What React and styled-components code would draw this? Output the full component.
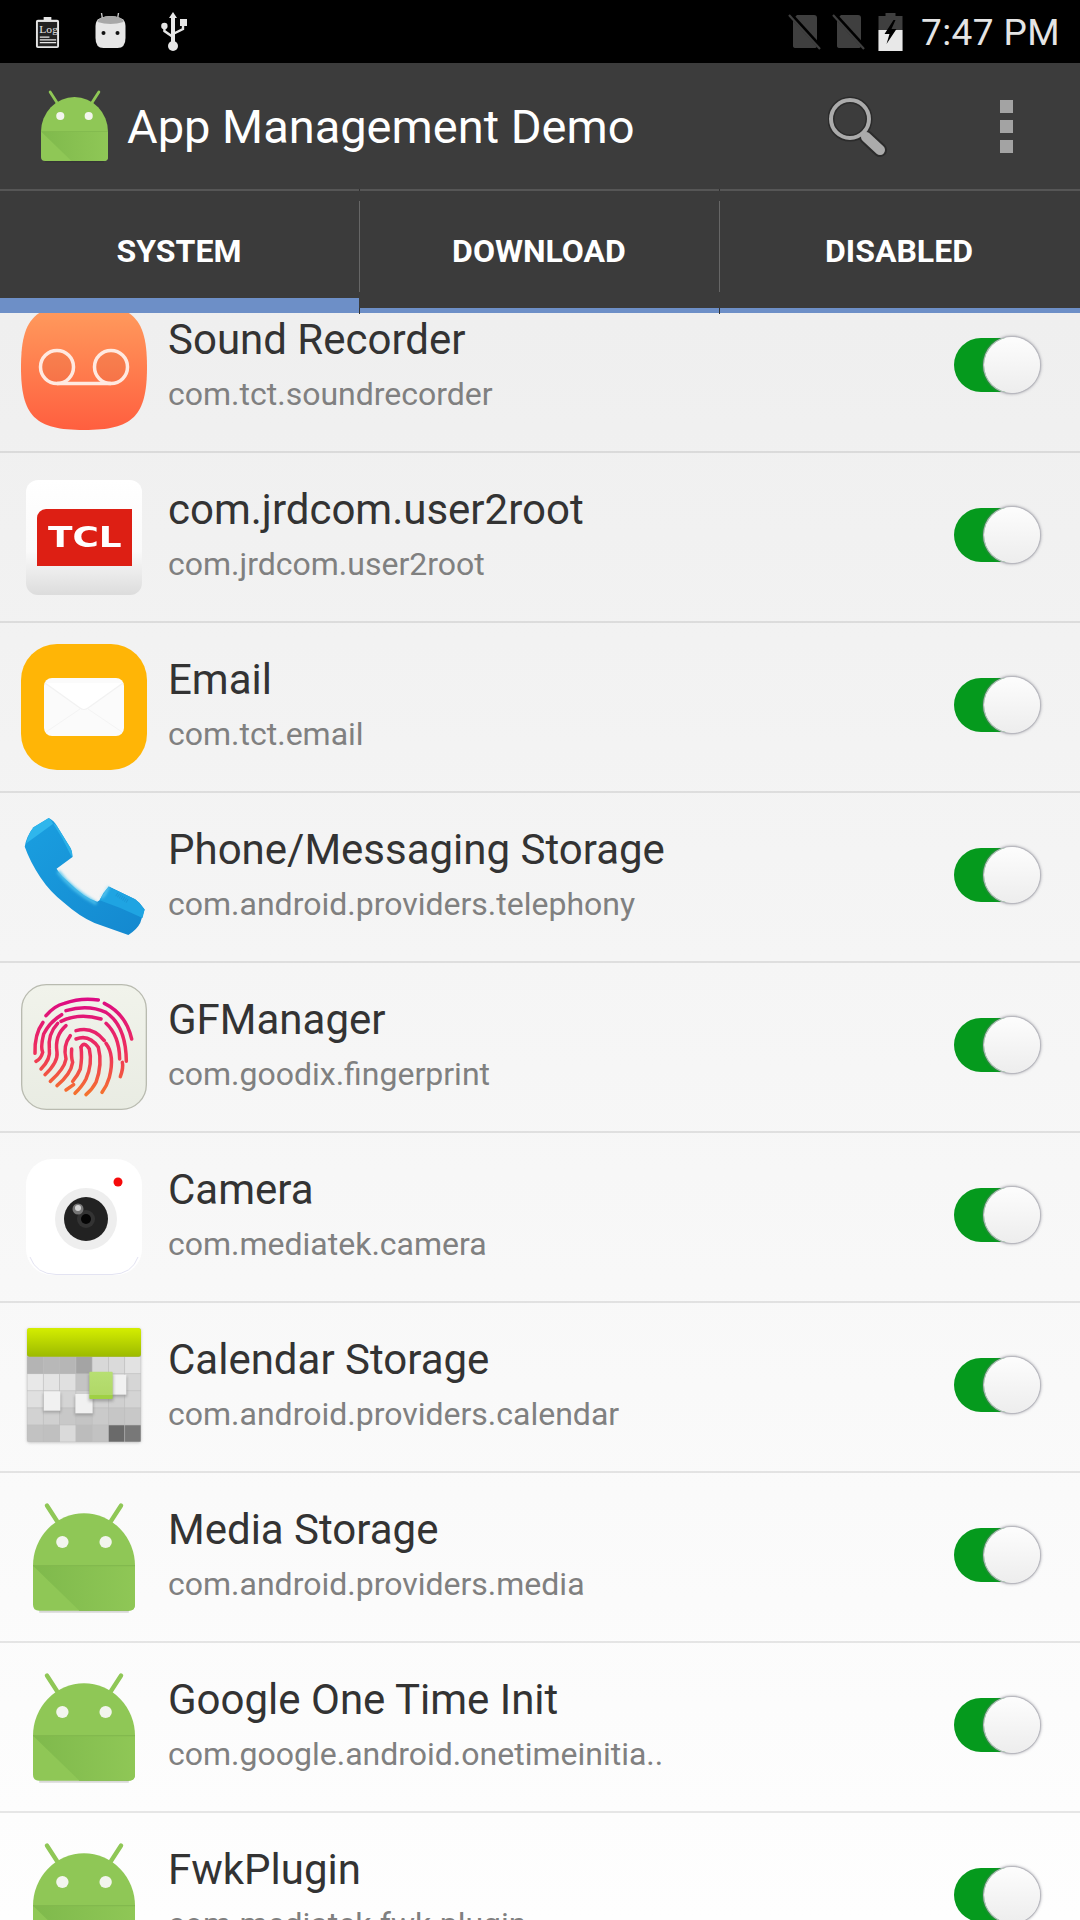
import React from "react";
import styled, { createGlobalStyle } from "styled-components";

const Global = createGlobalStyle`
  html, body { margin: 0; padding: 0; background: #000; }
  * { box-sizing: border-box; }
`;

const Screen = styled.div`
  width: 1080px;
  height: 1920px;
  overflow: hidden;
  display: flex;
  flex-direction: column;
  font-family: Roboto, "Liberation Sans", sans-serif;
  background: linear-gradient(#ececec, #fefefe);
`;

const StatusBar = styled.div`
  height: 63px;
  flex: none;
  background: #000;
  display: flex;
  align-items: center;
  padding: 0 20px 0 35px;
`;

const StatusLeft = styled.div`
  display: flex;
  align-items: center;
  flex: 1;
  gap: 35px;
`;

const StatusRight = styled.div`
  display: flex;
  align-items: center;
  gap: 10px;
`;

const Clock = styled.span`
  color: #e4e4e4;
  font-size: 37px;
  line-height: 63px;
  margin-left: 8px;
  letter-spacing: 0.4px;
  padding-top: 2px;
`;

const ActionBar = styled.div`
  height: 126px;
  flex: none;
  background: #3c3c3c;
  display: flex;
  align-items: center;
  padding: 0 67px 0 41px;
`;

const AppTitle = styled.div`
  flex: 1;
  color: #fff;
  font-size: 47px;
  margin-left: 19px;
  padding-top: 1px;
`;

const Overflow = styled.div`
  display: flex;
  flex-direction: column;
  gap: 7px;
  margin-left: 112px;
`;

const Dot = styled.span`
  width: 13px;
  height: 13px;
  background: #a3a3a3;
`;

const TabBar = styled.div`
  height: 124px;
  flex: none;
  display: flex;
  background: #3b3b3b;
  border-top: 2px solid #565656;
  position: relative;
  z-index: 2;
`;

const Tab = styled.div`
  flex: 1;
  display: flex;
  align-items: center;
  justify-content: center;
  position: relative;
  color: #fff;
  font-size: 32px;
  font-weight: 700;
  padding: 0 2px 2px 0;
`;

const TabIndicator = styled.span`
  position: absolute;
  left: 0;
  right: ${(p) => (p.$active ? "1px" : "0")};
  bottom: 0;
  height: ${(p) => (p.$active ? "15px" : "5px")};
  background: #6d8fc7;
`;

const TabDivider = styled.span`
  position: absolute;
  right: 0;
  top: 10px;
  height: 91px;
  width: 1px;
  background: #666;
  &::before {
    content: "";
    position: absolute;
    left: 0;
    top: -12px;
    width: 1px;
    height: 2px;
    background: #333;
  }
  &::after {
    content: "";
    position: absolute;
    left: 0;
    top: 107px;
    width: 1px;
    height: 6px;
    background: #333;
  }
`;

const List = styled.div`
  flex: 1;
  overflow: hidden;
`;

const Scroller = styled.div`
  margin-top: -30px;
`;

const Row = styled.div`
  height: 170px;
  display: flex;
  align-items: center;
  border-bottom: 2px solid rgba(0, 0, 0, 0.09);
`;

const IconSlot = styled.div`
  width: 168px;
  flex: none;
  display: flex;
  justify-content: center;
  align-items: center;
`;

const Texts = styled.div`
  flex: 1;
  min-width: 0;
  display: flex;
  flex-direction: column;
  gap: 11px;
  margin-top: -5px;
`;

const Title = styled.div`
  color: #333;
  font-size: 42px;
  line-height: 48px;
  white-space: nowrap;
`;

const Sub = styled.div`
  color: #808080;
  font-size: 32px;
  line-height: 38px;
  white-space: nowrap;
`;

const SwitchTrack = styled.div`
  width: 80px;
  height: 54px;
  flex: none;
  margin-right: 46px;
  margin-top: -4px;
  border-radius: 27px;
  background: #059a1d;
  position: relative;
`;

const SwitchKnob = styled.div`
  position: absolute;
  left: 30px;
  top: -1px;
  width: 56px;
  height: 56px;
  border-radius: 50%;
  background: linear-gradient(#fdfdfd, #ededed);
  box-shadow: 0 0 0 1px #b8b8bf, 0 0 3px 1px rgba(120, 120, 130, 0.7);
`;

const Squircle = styled.div`
  width: 126px;
  height: 126px;
  border-radius: ${(p) => p.$radius || 34}px;
  background: ${(p) => p.$bg};
  display: flex;
  align-items: center;
  justify-content: center;
`;

const TclTile = styled.div`
  width: 116px;
  height: 115px;
  border-radius: 12px;
  background: linear-gradient(#fff 0%, #fafafa 62%, #dcdcdc 100%);
  display: flex;
  justify-content: flex-end;
  padding: 29px 10px 0 0;
  align-items: flex-start;
`;

const TclBadge = styled.div`
  width: 95px;
  height: 57px;
  background: #dd1f14;
  border-radius: 9px 0 0 0;
  color: #fff;
  font-family: "DejaVu Sans", sans-serif;
  font-weight: 700;
  font-size: 28px;
  display: flex;
  align-items: center;
  justify-content: center;
`;

const TclWord = styled.span`
  display: inline-block;
  transform: scaleX(1.28);
`;

const Android = ({ w = 102, id = "a" }) => (
  <svg width={w} viewBox="0 0 66 69" style={{ display: "block", overflow: "visible" }}>
    <defs>
      <linearGradient id={id} x1="0" y1="0" x2="1" y2="0">
        <stop offset="0" stopColor="#7fb94c" />
        <stop offset="1" stopColor="#8fc756" />
      </linearGradient>
    </defs>
    <path d="M9 1 L15.5 11 M57 1 L50.5 11" stroke="#8fc756" strokeWidth="2.8" strokeLinecap="round" />
    <path d="M0 40 A33 34 0 0 1 66 40 L66 65 Q66 69 62 69 L4 69 Q0 69 0 65 Z" fill="#8fc756" />
    <path d="M0 40 L66 40 L66 65 Q66 69 62 69 L30 69 Z" fill={`url(#${id})`} />
    <rect y="39.5" width="66" height="0.8" fill="#82b94e" />
    <path d="M4 69.7 L62 69.7" stroke="#000" strokeOpacity="0.14" strokeWidth="1.2" />
    <ellipse cx="19" cy="24.6" rx="4" ry="3.9" fill="#f3f5ee" />
    <ellipse cx="47" cy="24.6" rx="4" ry="3.9" fill="#f3f5ee" />
  </svg>
);

const LogIcon = () => (
  <svg width="25" height="33" viewBox="0 0 26 36" preserveAspectRatio="none" style={{ display: "block", marginTop: "2px" }}>
    <path d="M9 1 H17 V4 H23 Q25 4 25 6 V33 Q25 35 23 35 H3 Q1 35 1 33 V6 Q1 4 3 4 H9 Z" fill="#e6e6e6" />
    <rect x="3" y="6.5" width="20" height="26.5" fill="#222" />
    <text x="4.5" y="19" fontFamily="Liberation Serif, serif" fontSize="12" fill="#e6e6e6">Log</text>
    <path d="M5 23 H15 M5 26 H22 M5 29 H22" stroke="#e6e6e6" strokeWidth="1.3" />
  </svg>
);

const HeadIcon = () => (
  <svg width="31" height="36" viewBox="0 0 30 36" style={{ display: "block", marginTop: "-3px" }}>
    <path d="M6 1 L7 7 M23 1 L22 7" stroke="#c8c8c8" strokeWidth="1.4" />
    <path d="M5 6 Q15 2 25 6 Q30 8 30 14 L30 26 Q30 36 22 36 L8 36 Q0 36 0 26 L0 14 Q0 8 5 6 Z" fill="#e6e6e6" />
    <path d="M5 6 Q15 2 25 6 Q28 8 28 10 Q15 14 2 10 Q2 8 5 6 Z" fill="#a8a8a8" />
    <circle cx="8" cy="21" r="2" fill="#111" />
    <circle cx="22" cy="21" r="2" fill="#111" />
  </svg>
);

const UsbIcon = () => (
  <svg width="26" height="40" viewBox="0 0 26 40" style={{ display: "block", marginTop: "1px" }}>
    <path d="M12 0 L16 6 H14 V30 H10 V6 H8 Z" fill="#e6e6e6" />
    <circle cx="12" cy="34" r="5" fill="#e6e6e6" />
    <circle cx="3.4" cy="14" r="3.2" fill="#e6e6e6" />
    <rect x="19" y="7" width="7" height="7" fill="#e6e6e6" />
    <path d="M3.4 15 V19 L12 25 M22 13 V17 L12 22" stroke="#e6e6e6" strokeWidth="2.4" fill="none" />
  </svg>
);

const SimOff = () => (
  <svg width="34" height="36" viewBox="0 0 32 36" style={{ display: "block" }}>
    <path d="M8 1 H25 Q28 1 28 4 V32 Q28 34 25 34 H7 Q4 34 4 32 V5 Z" fill="#3f3f3f" />
    <path d="M2 1 L33 35" stroke="#000" strokeWidth="4.4" />
    <path d="M0 1 L31 35" stroke="#3f3f3f" strokeWidth="2.2" />
  </svg>
);

const Battery = () => (
  <svg width="25" height="38" viewBox="0 0 24 38" style={{ display: "block", marginLeft: "2px" }}>
    <path d="M7 0 H17 V3 H24 V38 H0 V3 H7 Z" fill="#3f3f3f" />
    <path d="M0 17 H24 V38 H0 Z" fill="#e8e8e8" />
    <path d="M15 7 L6 21 H11 L8 31 L18 16 H13 L17 7 Z" fill="#000" />
  </svg>
);

const SearchIcon = () => (
  <svg width="60" height="62" viewBox="0 0 60 62" style={{ display: "block" }}>
    <circle cx="22" cy="24" r="19" fill="none" stroke="#2b2b2b" strokeWidth="7" />
    <path d="M38 42 L52 55" stroke="#2b2b2b" strokeWidth="14" strokeLinecap="round" />
    <circle cx="22" cy="24" r="19" fill="none" stroke="#ababab" strokeWidth="4" />
    <path d="M38 42 L52 55" stroke="#ababab" strokeWidth="10" strokeLinecap="round" />
    <path d="M33 38 L38 42" stroke="#ababab" strokeWidth="4" />
  </svg>
);

const Recorder = () => (
  <svg width="126" height="126" viewBox="0 0 126 126" style={{ display: "block" }}>
    <defs>
      <linearGradient id="rec" x1="0" y1="0" x2="0" y2="1">
        <stop offset="0" stopColor="#ff9d5e" />
        <stop offset="1" stopColor="#ff5f3f" />
      </linearGradient>
      <filter id="recBlur" x="-30%" y="-100%" width="160%" height="300%">
        <feGaussianBlur stdDeviation="4" />
      </filter>
    </defs>
    <path d="M63 0 C112 0 126 14 126 63 C126 112 112 126 63 126 C14 126 0 112 0 63 C0 14 14 0 63 0 Z" fill="url(#rec)" />
    <path d="M28 84 H98" stroke="#a8402a" strokeOpacity="0.35" strokeWidth="8" strokeLinecap="round" filter="url(#recBlur)" />
    <circle cx="36" cy="63" r="16.5" fill="#000" fillOpacity="0.03" stroke="#ffe9e0" strokeWidth="3.5" />
    <circle cx="90" cy="63" r="16.5" fill="#000" fillOpacity="0.03" stroke="#ffe9e0" strokeWidth="3.5" />
    <path d="M36 79.5 H90" stroke="#ffe9e0" strokeWidth="3.5" />
  </svg>
);

const Envelope = () => (
  <svg width="80" height="58" viewBox="0 0 80 58" style={{ display: "block" }}>
    <rect width="80" height="58" rx="8" fill="#fbfbfb" />
    <path d="M1 5 L36 30 Q40 33 44 30 L79 5 Z" fill="#ffffff" />
    <path d="M1 5 L36 30 Q40 33 44 30 L79 5" fill="none" stroke="#f2f2f2" strokeWidth="1.2" />
    <path d="M2 54 L36 31 M78 54 L44 31" stroke="#f4f4f4" strokeWidth="1" />
  </svg>
);

const Phone = () => (
  <svg width="128" height="128" viewBox="0 0 378 378" style={{ display: "block" }}>
    <defs>
      <linearGradient id="ph" x1="0" y1="0" x2="1" y2="1">
        <stop offset="0" stopColor="#1a9fe0" />
        <stop offset="1" stopColor="#1488cf" />
      </linearGradient>
      <filter id="phBlur" x="-20%" y="-20%" width="140%" height="140%">
        <feGaussianBlur stdDeviation="4" />
      </filter>
    </defs>
    <path d="M85 15 L40 42 Q18 70 14 100 Q30 145 60 190 Q90 235 130 265 Q175 305 220 325 L320 360 Q345 345 355 325 L368 285 Q355 265 340 255 L262 217 Q245 235 235 258 L228 262 Q190 250 145 205 Q120 185 108 165 L155 130 Q155 115 150 105 L110 40 Q100 22 85 15 Z" fill="url(#ph)" />
    <path d="M85 15 L40 42 Q25 60 18 90 Q60 60 98 32 Q92 20 85 15 Z" fill="#2fb6ec" />
    <path d="M98 32 L125 75 L150 125 L155 130 Q155 115 150 105 L110 40 Q104 30 98 32 Z" fill="#2cb1e8" />
    <path d="M262 217 Q245 235 235 258 Q300 280 362 310 L368 285 Q355 265 340 255 Z" fill="#1fa4e2" />
    <path d="M262 217 L250 240 L240 250" stroke="#7fdcf8" strokeWidth="5" fill="none" filter="url(#phBlur)" />
    <path d="M112 172 Q150 225 226 268" stroke="#4fc4ee" strokeWidth="9" fill="none" filter="url(#phBlur)" />
    <path d="M285 240 L320 262" stroke="#137fc0" strokeWidth="12" strokeDasharray="2 4" fill="none" opacity="0.5" />
  </svg>
);

const fingerprintPaths = [
  "M75 95 Q100 65 130 58 Q180 40 232 48",
  "M250 58 Q315 90 332 165",
  "M135 80 Q200 60 255 85 Q315 125 316 232",
  "M66 115 Q40 150 42 208",
  "M122 92 Q85 115 68 150 Q58 190 65 205 Q60 225 45 232",
  "M120 112 Q175 85 240 105",
  "M255 118 Q295 155 296 225",
  "M304 235 Q308 250 298 278",
  "M110 118 Q80 150 85 195 Q90 225 60 255",
  "M165 140 Q215 125 250 170",
  "M135 125 Q100 155 108 205 Q112 235 72 272",
  "M148 155 Q125 185 135 225 Q130 255 88 292",
  "M255 178 Q282 215 265 280 Q258 305 243 325",
  "M165 165 Q205 150 232 190 Q245 240 225 295 Q215 315 195 332",
  "M152 195 Q150 220 155 235 Q150 270 108 305",
  "M180 190 Q190 170 205 195 Q215 240 195 285 Q185 305 162 328",
  "M180 190 Q184 220 178 255 Q170 275 155 292",
  "M158 302 L135 318",
];

const Fingerprint = () => (
  <svg width="126" height="126" viewBox="0 0 378 378" style={{ display: "block" }}>
    <defs>
      <linearGradient id="fpbg" x1="0" y1="0" x2="0" y2="1">
        <stop offset="0" stopColor="#f1f3eb" />
        <stop offset="1" stopColor="#e9ece3" />
      </linearGradient>
      <linearGradient id="fp" gradientUnits="userSpaceOnUse" x1="189" y1="40" x2="189" y2="335">
        <stop offset="0" stopColor="#dc0a84" />
        <stop offset="0.55" stopColor="#ee2f5c" />
        <stop offset="1" stopColor="#f5752c" />
      </linearGradient>
    </defs>
    <rect x="2" y="2" width="374" height="374" rx="74" fill="url(#fpbg)" stroke="#b9bbb0" strokeWidth="4" />
    <g fill="none" stroke="url(#fp)" strokeWidth="10.5" strokeLinecap="round">
      {fingerprintPaths.map((d) => (
        <path key={d} d={d} />
      ))}
    </g>
  </svg>
);

const CameraIcon = () => (
  <svg width="116" height="116" viewBox="0 0 116 116" style={{ display: "block" }}>
    <rect width="116" height="116" rx="26" fill="#fff" />
    <path d="M4 98 Q10 115 30 115.5 H86 Q106 115 112 98" fill="none" stroke="#e3e3f2" strokeWidth="1" />
    <circle cx="60" cy="60" r="31" fill="#eeeeee" />
    <circle cx="60" cy="60" r="22" fill="#222" />
    <circle cx="60" cy="60" r="9" fill="#333" />
    <circle cx="60" cy="60" r="5" fill="#050505" />
    <circle cx="52" cy="50" r="5.5" fill="#777" />
    <circle cx="52" cy="49" r="3" fill="#d4d4d4" />
    <circle cx="92" cy="23" r="4.5" fill="#f50a0a" />
  </svg>
);

const grid = [
  ["#b4b4b4", "#b8b8b8", "#b6b6b6", "#a4a4a4", "#d8d8d8", "#dadada", "#e2e2e2"],
  ["#e8e8e8", "#e4e4e4", "#e0e0e0", "#c4c4c4", "#d0d0d0", "#dadada", "#d6d6d6"],
  ["#e0e0e0", "#d8d8d8", "#d4d4d4", "#d0d0d0", "#d2d2d2", "#d0d0d0", "#d4d4d4"],
  ["#d2d2d2", "#d0d0d0", "#c8c8c8", "#c4c4c4", "#cacaca", "#c6c6c6", "#c8c8c8"],
  ["#c2c2c2", "#c0c0c0", "#dadada", "#bcbcbc", "#c2c2c2", "#6a6a6a", "#787878"],
];

const tiles = [
  [68, 202, 50, 58],
  [163, 210, 52, 58],
  [272, 152, 44, 60],
];

const CalendarIcon = () => (
  <svg width="126" height="126" viewBox="0 0 378 378" style={{ display: "block" }}>
    <defs>
      <linearGradient id="calTop" x1="0" y1="0" x2="0" y2="1">
        <stop offset="0" stopColor="#d4ee00" />
        <stop offset="1" stopColor="#9cba00" />
      </linearGradient>
      <linearGradient id="calTile" x1="0" y1="0" x2="0" y2="1">
        <stop offset="0" stopColor="#b7df72" />
        <stop offset="0.85" stopColor="#b0d868" />
        <stop offset="0.86" stopColor="#9fd044" />
        <stop offset="1" stopColor="#9fd044" />
      </linearGradient>
      <filter id="calShadow" x="-30%" y="-30%" width="160%" height="160%">
        <feGaussianBlur stdDeviation="5" />
      </filter>
    </defs>
    <rect x="18" y="14" width="342" height="342" rx="8" fill="#9a9a9a" filter="url(#calShadow)" opacity="0.6" />
    <rect x="18" y="12" width="342" height="342" rx="8" fill="#bdbdbd" />
    {grid.map((cols, r) =>
      cols.map((c, i) => (
        <rect key={`${r}-${i}`} x={18 + i * 48.86 + 1} y={98 + r * 51.2 + 1} width="46.8" height="49.2" fill={c} />
      ))
    )}
    <rect x="18" y="12" width="342" height="86" rx="8" fill="url(#calTop)" />
    {tiles.map(([x, y, w, h]) => (
      <g key={x}>
        <rect x={x - 2} y={y + 6} width={w + 4} height={h} fill="#6e6e6e" opacity="0.45" filter="url(#calShadow)" />
        <rect x={x} y={y} width={w} height={h} fill="#f1f1f1" />
      </g>
    ))}
    <rect x="203" y="150" width="74" height="82" fill="#6e6e6e" opacity="0.5" filter="url(#calShadow)" />
    <rect x="205" y="143" width="70" height="82" rx="3" fill="url(#calTile)" />
  </svg>
);

const EmailTile = () => (
  <Squircle $bg="#ffb506" $radius={36}>
    <Envelope />
  </Squircle>
);

const TclIcon = () => (
  <TclTile>
    <TclBadge>
      <TclWord>TCL</TclWord>
    </TclBadge>
  </TclTile>
);

const apps = [
  { t: "Sound Recorder", s: "com.tct.soundrecorder", i: <Recorder /> },
  { t: "com.jrdcom.user2root", s: "com.jrdcom.user2root", i: <TclIcon /> },
  { t: "Email", s: "com.tct.email", i: <EmailTile /> },
  { t: "Phone/Messaging Storage", s: "com.android.providers.telephony", i: <Phone /> },
  { t: "GFManager", s: "com.goodix.fingerprint", i: <Fingerprint /> },
  { t: "Camera", s: "com.mediatek.camera", i: <CameraIcon /> },
  { t: "Calendar Storage", s: "com.android.providers.calendar", i: <CalendarIcon /> },
  { t: "Media Storage", s: "com.android.providers.media", i: <Android id="a1" /> },
  { t: "Google One Time Init", s: "com.google.android.onetimeinitia..", i: <Android id="a2" /> },
  { t: "FwkPlugin", s: "com.mediatek.fwk.plugin", i: <Android id="a3" /> },
];

export default function App() {
  return (
    <Screen>
      <Global />
      <StatusBar>
        <StatusLeft>
          <LogIcon />
          <HeadIcon />
          <UsbIcon />
        </StatusLeft>
        <StatusRight>
          <SimOff />
          <SimOff />
          <Battery />
          <Clock>7:47 PM</Clock>
        </StatusRight>
      </StatusBar>
      <ActionBar>
        <Android w={67} id="a0" />
        <AppTitle>App Management Demo</AppTitle>
        <SearchIcon />
        <Overflow>
          <Dot />
          <Dot />
          <Dot />
        </Overflow>
      </ActionBar>
      <TabBar>
        <Tab>
          SYSTEM
          <TabIndicator $active />
          <TabDivider />
        </Tab>
        <Tab>
          DOWNLOAD
          <TabIndicator />
          <TabDivider />
        </Tab>
        <Tab>
          DISABLED
          <TabIndicator />
        </Tab>
      </TabBar>
      <List>
        <Scroller>
          {apps.map((a) => (
            <Row key={a.t}>
              <IconSlot>{a.i}</IconSlot>
              <Texts>
                <Title>{a.t}</Title>
                <Sub>{a.s}</Sub>
              </Texts>
              <SwitchTrack>
                <SwitchKnob />
              </SwitchTrack>
            </Row>
          ))}
        </Scroller>
      </List>
    </Screen>
  );
}
